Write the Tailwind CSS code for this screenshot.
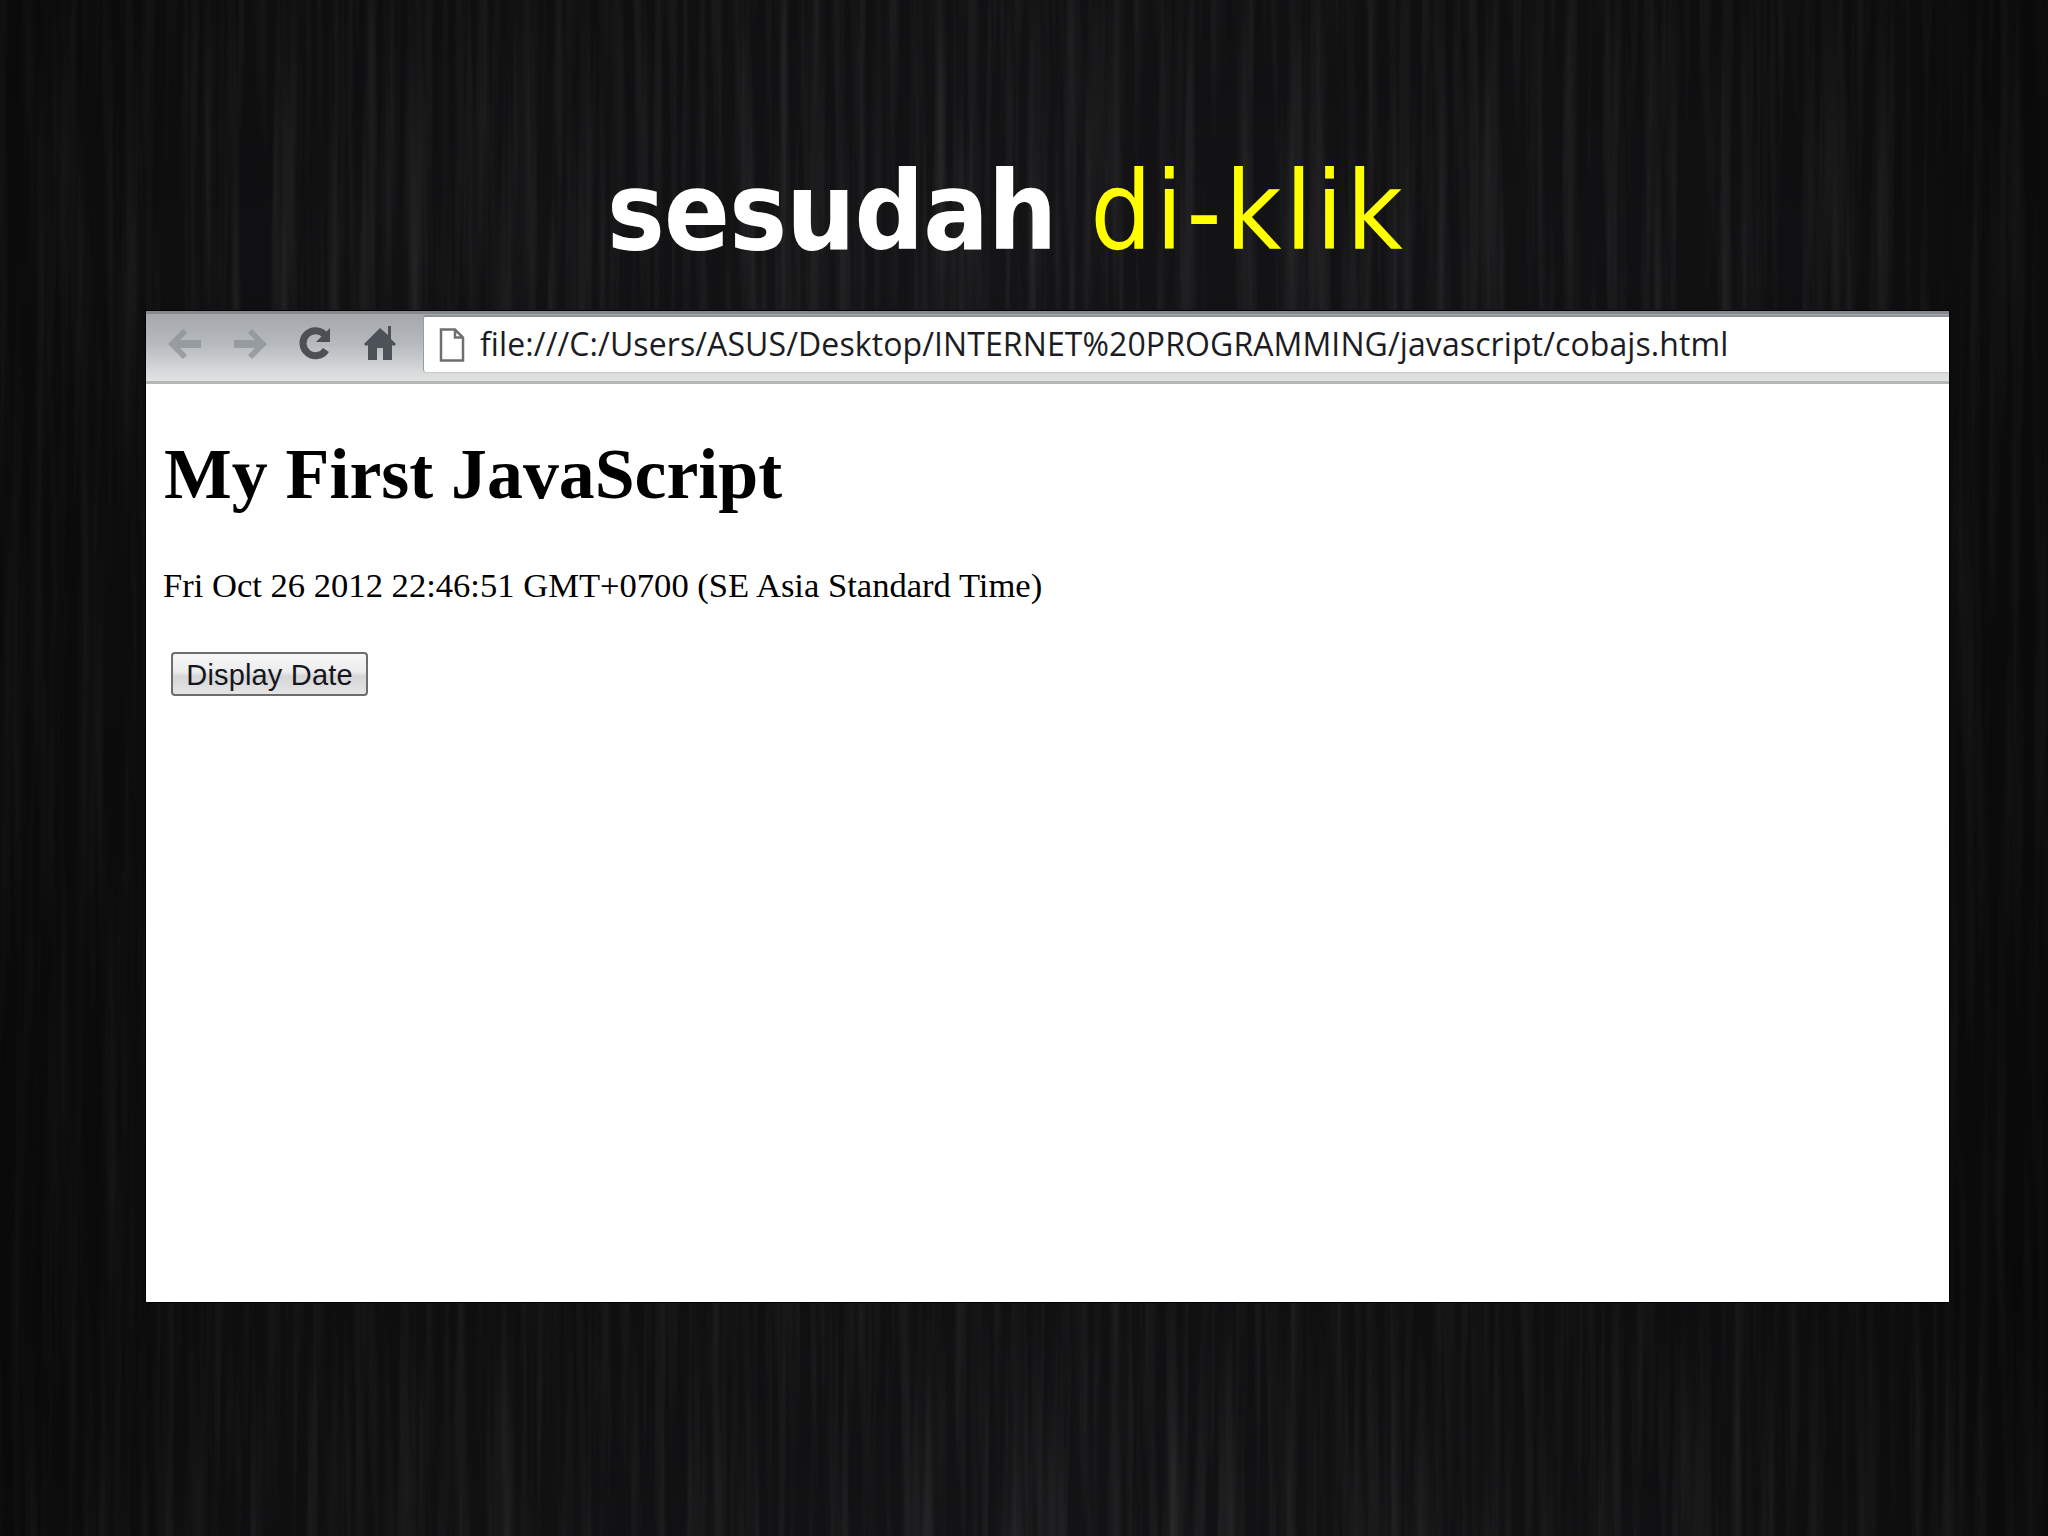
<!DOCTYPE html>
<html lang="en">
<head>
  <meta charset="UTF-8">
  <script src="https://cdn.jsdelivr.net/npm/@tailwindcss/browser@4"></script>
  <title>sesudah di-klik</title>
</head>
<body class="relative w-[2048px] h-[1536px] overflow-hidden bg-[#141416]">
  <!-- wood grain background: stretched noise -->
  <svg class="absolute inset-0 w-[2048px] h-[1536px]" viewBox="0 0 2048 1536">
    <defs>
      <filter id="grain" x="0" y="0" width="100%" height="100%" color-interpolation-filters="sRGB">
        <feTurbulence type="fractalNoise" baseFrequency="0.09 0.0022" numOctaves="3" seed="11"/>
        <feColorMatrix type="matrix" values="0 0 0 0 1  0 0 0 0 1  0 0 0 0 1.05  0.9 0 0 0 -0.36"/>
      </filter>
      <linearGradient id="fadeY" x1="0" y1="0" x2="0" y2="1">
        <stop offset="0" stop-color="#000" stop-opacity=".15"/>
        <stop offset=".16" stop-color="#000" stop-opacity="0"/>
        <stop offset=".3" stop-color="#000" stop-opacity=".1"/>
        <stop offset=".85" stop-color="#000" stop-opacity=".18"/>
        <stop offset="1" stop-color="#000" stop-opacity=".05"/>
      </linearGradient>
      <linearGradient id="fadeX" x1="0" y1="0" x2="1" y2="0">
        <stop offset="0" stop-color="#000" stop-opacity=".45"/>
        <stop offset=".12" stop-color="#000" stop-opacity=".2"/>
        <stop offset=".5" stop-color="#000" stop-opacity="0"/>
        <stop offset=".88" stop-color="#000" stop-opacity=".2"/>
        <stop offset="1" stop-color="#000" stop-opacity=".45"/>
      </linearGradient>
    </defs>
    <rect width="2048" height="1536" filter="url(#grain)" opacity=".2"/>
    <rect width="2048" height="1536" fill="url(#fadeY)"/>
    <rect width="2048" height="1536" fill="url(#fadeX)"/>
  </svg>

  <div class="relative w-[2048px] h-[1536px] flex flex-col">
    <h1 class="h-[311px] pl-[607px] pt-[147px] font-['DejaVu_Sans_Condensed','DejaVu_Sans',sans-serif] text-[108px] leading-[130px] whitespace-nowrap">
      <span class="font-bold text-white tracking-[-0.8px]">sesudah</span>
      <span class="font-normal text-[#ffff00] tracking-[3.700px] ml-[3px]">di-klik</span>
    </h1>

    <div class="ml-[146px] w-[1803px] h-[991px] bg-white flex flex-col outline outline-1 outline-black">
      <!-- browser toolbar -->
      <div class="h-[73px] flex border-t-[3px] border-t-[#85888c] border-b-[3px] border-b-[#b4b6b8] bg-[linear-gradient(180deg,#a4a8ad_0%,#b6babe_45%,#d9dbdc_88%,#e1e2e2_100%)]">
        <div class="w-[277px] pl-[20px] pt-[11px] flex items-start shrink-0">
          <svg class="w-[38px] h-[34px] mt-[2px]" viewBox="0 0 38 34"><path d="M17 2 2 17l15 15 4-4-7-7h21v-8H14l7-7z" fill="#8f9397" opacity=".8"/></svg>
          <svg class="w-[38px] h-[34px] mt-[2px] ml-[27px]" viewBox="0 0 38 34"><path d="m21 2 15 15-15 15-4-4 7-7H3v-8h21l-7-7z" fill="#8f9397" opacity=".8"/></svg>
          <svg class="w-[36px] h-[36px] ml-[27px]" viewBox="0 0 36 36"><path d="M30 25a12.500 12.500 0 1 1-1-15" fill="none" stroke="#4c5054" stroke-width="7"/><path d="M34 3v14H20z" fill="#4c5054"/></svg>
          <svg class="w-[34px] h-[36px] ml-[31px]" viewBox="0 0 34 36"><path d="M17 3 1 19l2 2 2-1v15h9V23h6v12h9V20l2 1 2-2-5-5V1h-3v9z" fill="#4d5258"/></svg>
        </div>
        <!-- address bar -->
        <div class="flex-1 h-[57px] mt-[1px] pl-[15px] flex items-center bg-white rounded-l-[3px] border-l border-l-[#9a9c9e] border-t-[2px] border-t-[#8f9194] shadow-[0_1px_0_#c9cacb]">
          <svg class="w-[26px] h-[34px] shrink-0" viewBox="0 0 26 34"><path d="M2 1.500h14l8 8v23H2z M16 1.500v8h8" fill="#fff" stroke="#6f6f6f" stroke-width="2.500"/></svg>
          <span class="ml-[15px] -mt-[2px] font-['Open_Sans',sans-serif] text-[32px] tracking-[0.1px] text-[#1c1c24] whitespace-nowrap">file:///C:/Users/ASUS/Desktop/INTERNET%20PROGRAMMING/javascript/cobajs.html</span>
        </div>
      </div>

      <!-- page body -->
      <div class="pl-[18px] pt-[52px] font-['Liberation_Serif',serif] text-black">
        <h2 class="text-[71.800px] leading-[76px] font-bold whitespace-nowrap">My First JavaScript</h2>
        <p class="mt-[52px] -ml-[1px] text-[34.600px] leading-[42px] whitespace-nowrap">Fri Oct 26 2012 22:46:51 GMT+0700 (SE Asia Standard Time)</p>
        <button class="mt-[46px] ml-[7px] w-[197px] h-[44px] pt-[3px] flex items-center justify-center rounded-[4px] border-2 border-[#6d6d6d] bg-[linear-gradient(180deg,#f7f7f7_0%,#ececec_45%,#d6d6d6_55%,#e4e4e4_100%)] font-['Liberation_Sans',sans-serif] text-[29px] tracking-[0.17px] text-[#16161e]">Display Date</button>
      </div>
    </div>
  </div>
</body>
</html>
